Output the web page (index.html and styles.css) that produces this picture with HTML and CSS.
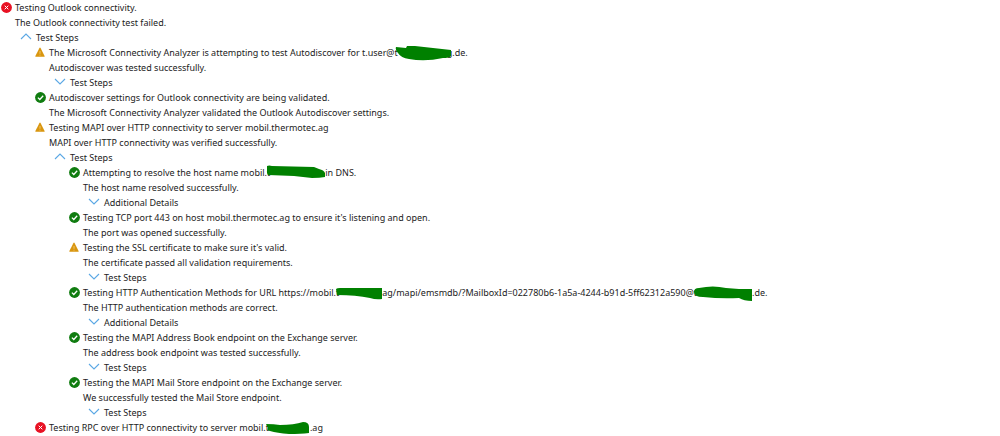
FILE: index.html
```html
<!DOCTYPE html>
<html lang="en">

<head>
    <meta charset="UTF-8">
    <meta name="viewport" content="width=device-width, initial-scale=1.0">
    <title>Outlook Connectivity Test</title>
    <link rel="stylesheet" href="styles.css">
</head>

<body>
    <!-- shared icons -->
    <svg class="sprite" aria-hidden="true">
        <symbol id="error" viewBox="0 0 11 11">
            <circle cx="5.5" cy="5.5" r="5.4" fill="#e81123" />
            <path d="M3.7 3.7l3.6 3.6M7.3 3.7L3.7 7.3" fill="none" stroke="#fff" stroke-width="1" />
        </symbol>
        <symbol id="success" viewBox="0 0 11 11">
            <circle cx="5.5" cy="5.5" r="5.4" fill="#107c10" />
            <path d="M2.9 5.6l1.9 1.9 3.4-3.7" fill="none" stroke="#fff" stroke-width="1.3" />
        </symbol>
        <symbol id="warning" viewBox="0 0 11 11">
            <path d="M4.3 1.2q.7-1.3 1.4 0l3.9 7.7q.3.9-.6.9H1q-.9 0-.6-.9z" fill="#d9960f" />
            <path d="M5 4v2.8M5 7.7v1" stroke="#f3cf85" stroke-width=".8" />
        </symbol>
        <symbol id="up" viewBox="0 0 12 8">
            <path d="M1 6l5-5 5 5" fill="none" stroke="#5ba8e5" stroke-width="1.1" />
        </symbol>
        <symbol id="down" viewBox="0 0 12 8">
            <path d="M1 1l5 5 5-5" fill="none" stroke="#5ba8e5" stroke-width="1.1" />
        </symbol>
    </svg>

    <main class="report">
        <div class="step">
            <svg class="icon"><use href="#error" /></svg>
            <div class="content">
                <p>Testing Outlook connectivity.</p>
                <p>The Outlook connectivity test failed.</p>
                <button class="toggle" aria-expanded="true"><svg class="chevron"><use href="#up" /></svg>Test Steps</button>
                <ul class="steps">
                    <li class="step">
                        <svg class="icon"><use href="#warning" /></svg>
                        <div class="content">
                            <p>The Microsoft Connectivity Analyzer is attempting to test Autodiscover for t.user@t<svg class="mark mark-user" viewBox="0 0 57 16"><path d="M1 2l10 1 1-2h8l36 4v6q-2 2-8 2-18 4-34 1-8-1-11-6-3-3-2-6z" /></svg>g.de.</p>
                            <p>Autodiscover was tested successfully.</p>
                            <button class="toggle" aria-expanded="false"><svg class="chevron"><use href="#down" /></svg>Test Steps</button>
                        </div>
                    </li>
                    <li class="step">
                        <svg class="icon"><use href="#success" /></svg>
                        <div class="content">
                            <p>Autodiscover settings for Outlook connectivity are being validated.</p>
                            <p>The Microsoft Connectivity Analyzer validated the Outlook Autodiscover settings.</p>
                        </div>
                    </li>
                    <li class="step">
                        <svg class="icon"><use href="#warning" /></svg>
                        <div class="content">
                            <p>Testing MAPI over HTTP connectivity to server mobil.thermotec.ag</p>
                            <p>MAPI over HTTP connectivity was verified successfully.</p>
                            <button class="toggle" aria-expanded="true"><svg class="chevron"><use href="#up" /></svg>Test Steps</button>
                            <ul class="steps">
                                <li class="step">
                                    <svg class="icon"><use href="#success" /></svg>
                                    <div class="content">
                                        <p>Attempting to resolve the host name mobil.t<svg class="mark mark-dns" viewBox="0 0 58 16"><path d="M0 1q2-1 5 0l42 1 5 2q5 1 6 4v4q-5 1-13 1l-18-2-26-1-1-2z" /></svg>in DNS.</p>
                                        <p>The host name resolved successfully.</p>
                                        <button class="toggle" aria-expanded="false"><svg class="chevron"><use href="#down" /></svg>Additional Details</button>
                                    </div>
                                </li>
                                <li class="step">
                                    <svg class="icon"><use href="#success" /></svg>
                                    <div class="content">
                                        <p>Testing TCP port 443 on host mobil.thermotec.ag to ensure it's listening and open.</p>
                                        <p>The port was opened successfully.</p>
                                    </div>
                                </li>
                                <li class="step">
                                    <svg class="icon"><use href="#warning" /></svg>
                                    <div class="content">
                                        <p>Testing the SSL certificate to make sure it's valid.</p>
                                        <p>The certificate passed all validation requirements.</p>
                                        <button class="toggle" aria-expanded="false"><svg class="chevron"><use href="#down" /></svg>Test Steps</button>
                                    </div>
                                </li>
                                <li class="step">
                                    <svg class="icon"><use href="#success" /></svg>
                                    <div class="content">
                                        <p>Testing HTTP Authentication Methods for URL https://mobil.t<svg class="mark mark-url" viewBox="0 0 46 16"><path d="M0 4q1-1 4-1h42v11q-6 1-12-1-14-3-33-3z" /></svg>ag/mapi/emsmdb/?MailboxId=022780b6-1a5a-4244-b91d-5ff62312a590@t<svg class="mark mark-mailbox" viewBox="0 0 58 16"><path d="M0 7q0-4 5-4 14-3 27 0l13 1h13v12q-8 0-13-3-18 1-36-1-9 0-9-5z" /></svg>.de.</p>
                                        <p>The HTTP authentication methods are correct.</p>
                                        <button class="toggle" aria-expanded="false"><svg class="chevron"><use href="#down" /></svg>Additional Details</button>
                                    </div>
                                </li>
                                <li class="step">
                                    <svg class="icon"><use href="#success" /></svg>
                                    <div class="content">
                                        <p>Testing the MAPI Address Book endpoint on the Exchange server.</p>
                                        <p>The address book endpoint was tested successfully.</p>
                                        <button class="toggle" aria-expanded="false"><svg class="chevron"><use href="#down" /></svg>Test Steps</button>
                                    </div>
                                </li>
                                <li class="step">
                                    <svg class="icon"><use href="#success" /></svg>
                                    <div class="content">
                                        <p>Testing the MAPI Mail Store endpoint on the Exchange server.</p>
                                        <p>We successfully tested the Mail Store endpoint.</p>
                                        <button class="toggle" aria-expanded="false"><svg class="chevron"><use href="#down" /></svg>Test Steps</button>
                                    </div>
                                </li>
                            </ul>
                        </div>
                    </li>
                    <li class="step">
                        <svg class="icon"><use href="#error" /></svg>
                        <div class="content">
                            <p>Testing RPC over HTTP connectivity to server mobil.t<svg class="mark mark-rpc" viewBox="0 0 44 16"><path d="M0 4q8 0 14 1 14 0 23-3 6 0 6 5v6q-8 1-20 1-12-1-19-3-4-1-2-3z" /></svg>.ag</p>
                        </div>
                    </li>
                </ul>
            </div>
        </div>
    </main>
</body>

</html>
```
FILE: styles.css
```css
body {
    margin: 0;
    background: #fff;
    color: #222;
    font-family: "Noto Sans", "Open Sans", sans-serif;
    font-size: 9px;
    line-height: 15px;
}

.sprite {
    display: none;
}

.report {
    padding-left: 1px;
}

.step {
    display: flex;
    gap: 3px;
}

.icon {
    flex: none;
    width: 11px;
    height: 11px;
    margin-top: 2px;
}

.content {
    flex: 1;
    min-width: 0;
}

p {
    margin: 0;
}

.steps {
    list-style: none;
    margin: 0;
    padding: 0 0 0 20px;
}

.toggle {
    display: flex;
    gap: 4px;
    padding: 0 0 0 5px;
    border: none;
    background: none;
    color: inherit;
    font: inherit;
    cursor: pointer;
}

.chevron {
    width: 12px;
    height: 8px;
    margin-top: 3px;
}

/* blacked out host names, drawn over the letters next to them */
.mark {
    position: relative;
    height: 16px;
    margin: -5px 0 -3px -3px;
    vertical-align: middle;
    fill: #008000;
}

.mark-user {
    width: 57px;
    margin-right: -5px;
}

.mark-dns,
.mark-mailbox {
    width: 58px;
}

.mark-url {
    width: 46px;
}

.mark-rpc {
    width: 44px;
}
```
